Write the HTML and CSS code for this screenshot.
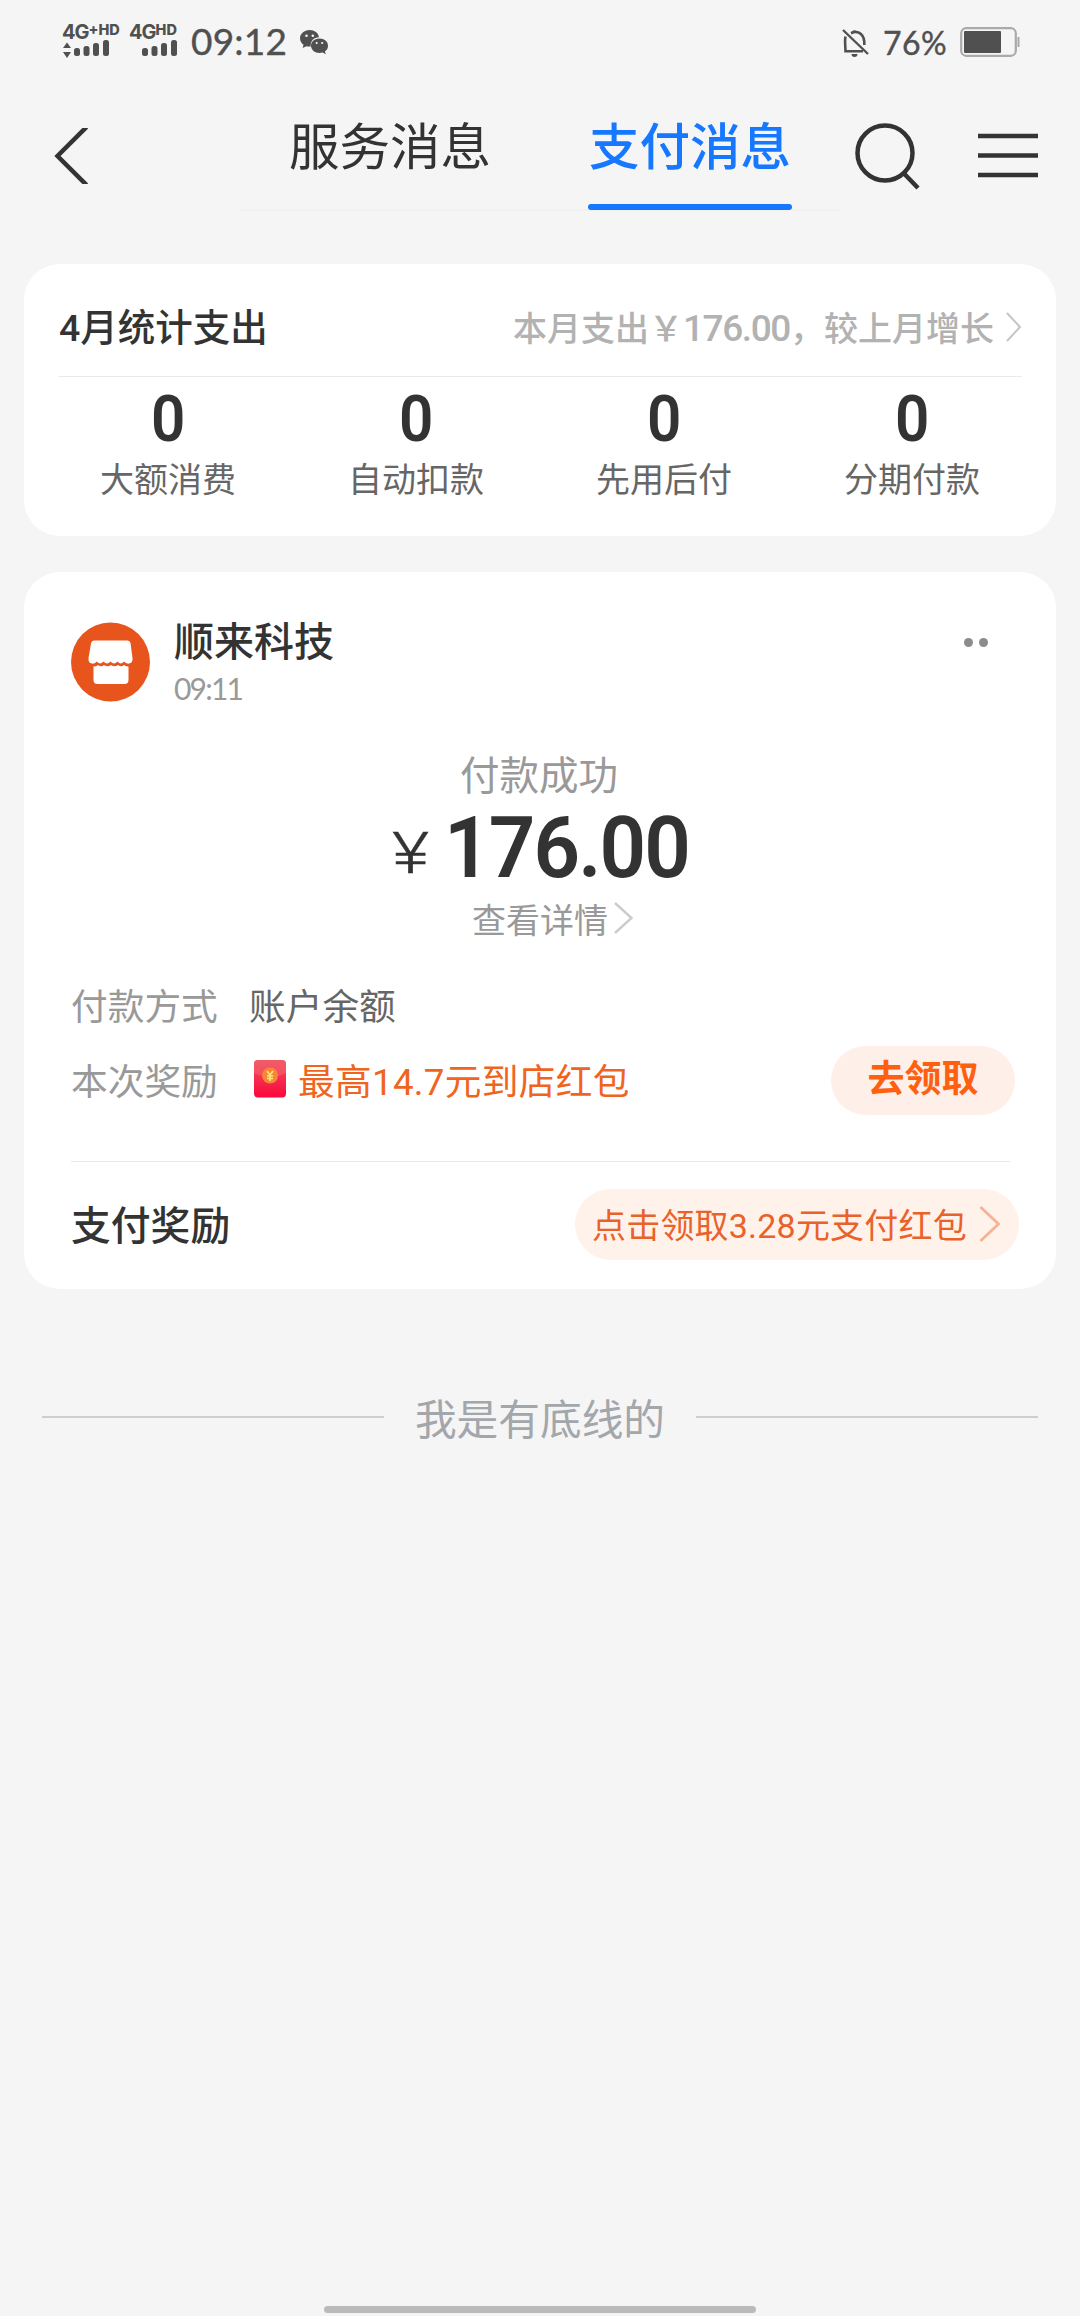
FILE: index.html
```html
<!DOCTYPE html>
<html lang="zh-CN">
<head>
<meta charset="utf-8">
<title>支付消息</title>
<link rel="stylesheet" href="styles.css">
</head>
<body>
<div class="screen">
  <header class="status">
    <div class="signal">
      <div class="net">4G<sup>+HD</sup></div>
      <svg width="50" height="18" viewBox="0 0 50 18" fill="#505050"><path d="M1 8 5 2.5 9 8zM1 12h8l-4 6z"/><rect x="12" y="8" width="6" height="8" rx="2.5"/><rect x="21.500" y="6" width="6" height="10" rx="2.500"/><rect x="31" y="3" width="6" height="13" rx="2.500"/><rect x="41" y="0" width="6" height="16" rx="2.500"/></svg>
    </div>
    <div class="signal second">
      <div class="net">4G<sup>HD</sup></div>
      <svg width="50" height="18" viewBox="0 0 50 18" fill="#505050"><rect x="12" y="8" width="6" height="8" rx="2.500"/><rect x="21.500" y="6" width="6" height="10" rx="2.500"/><rect x="31" y="3" width="6" height="13" rx="2.500"/><rect x="41" y="0" width="6" height="16" rx="2.500"/></svg>
    </div>
    <span class="clock">09:12</span>
    <svg class="wechat" width="29" height="25" viewBox="0 0 29 25" fill="#505050"><path d="M9.500 0C4.200 0 0 3.700 0 8.300c0 2.600 1.300 4.900 3.500 6.400L2.700 18l3.600-1.800c1.500.4 3 .5 4.500.3C10.100 11 14 7.300 19 7.200 18.500 3 14.500 0 9.500 0z"/><path d="M19.500 8.500c-4.700 0-8.500 3.100-8.500 7.200s3.800 7.200 8.500 7.200c1.100 0 2.200-.2 3.200-.5l3 1.800-.7-2.900c2-1.300 3-3.300 3-5.600 0-4.100-3.800-7.200-8.500-7.200z"/><g fill="#f5f5f5"><circle cx="6.500" cy="5.800" r="1.300"/><circle cx="12.800" cy="5.800" r="1.300"/><circle cx="16.700" cy="13" r="1.100"/><circle cx="22.200" cy="13" r="1.100"/></g></svg>
    <svg class="bell" width="28" height="30" viewBox="0 0 28 30" fill="none" stroke="#505050" stroke-width="2.600"><path d="M3.500 8.500C2.500 13 3.500 19 3.500 23.200H21M9 5.200C17 1.500 23 7 22.300 17"/><path d="M1 2 26 26" stroke-width="2.400"/><path d="M9.500 4a3.500 3.500 0 0 1 6 0zM9.500 26h6a3 3 0 0 1-6 0z" fill="#505050" stroke="none"/></svg>
    <span class="percent">76%</span>
    <svg class="battery" width="60" height="30" viewBox="0 0 60 30"><rect x="1.200" y="1.200" width="54.600" height="27.600" rx="5" fill="none" stroke="#aaa" stroke-width="2.200"/><rect x="4" y="4" width="37" height="22" rx="1" fill="#505050"/><path d="M58.500 10v10" stroke="#aaa" stroke-width="2"/></svg>
  </header>

  <nav class="nav">
    <svg class="back" width="34" height="56" viewBox="0 0 34 56" fill="none" stroke="#333" stroke-width="4.500"><path d="M32.500-1 3.500 28 32.500 57"/></svg>
    <div class="tabs">
      <div class="tab">服务消息</div>
      <div class="tab active">支付消息</div>
    </div>
    <svg class="search" width="66" height="68" viewBox="0 0 66 68" fill="none" stroke="#333" stroke-width="4.500"><circle cx="30" cy="30" r="27.500"/><path d="M48.500 50 63 65"/></svg>
    <svg class="menu" width="60" height="46" viewBox="0 0 60 46" stroke="#333" stroke-width="4.500"><path d="M0 3h60M0 22.500h60M0 42h60"/></svg>
  </nav>

  <main>
    <section class="card summary">
      <div class="summary-head">
        <h2>4月统计支出</h2>
        <div class="trend"><span>本月支出￥<b>176.00</b>，较上月增长</span>
          <svg width="16" height="30" viewBox="0 0 16 30" fill="none" stroke="#c4c4c4" stroke-width="2"><path d="M1 1 14 15 1 29"/></svg></div>
      </div>
      <div class="stats">
        <div class="stat"><strong>0</strong><span>大额消费</span></div>
        <div class="stat"><strong>0</strong><span>自动扣款</span></div>
        <div class="stat"><strong>0</strong><span>先用后付</span></div>
        <div class="stat"><strong>0</strong><span>分期付款</span></div>
      </div>
    </section>

    <section class="card bill">
      <div class="merchant">
        <svg class="avatar" width="80" height="80" viewBox="0 0 80 80"><circle cx="39.500" cy="40" r="39.500" fill="#e7541c"/><path d="M24 18.500h32q3 0 3.600 3L61.500 36q.5 5-3.500 5.600-3 .4-5-2-3 3.800-6.500 0-3.500 3.800-7 0-3.500 3.800-7 0-3.500 3.800-6.500 0-2 2.400-5 2-4-.6-3.500-5.600l2.500-14.500q.600-3 3.500-3z" fill="#fff"/><path d="M22.500 44.500q3 0 4.500-1.500 3 2.600 6 0 3.500 2.600 7 0 3.500 2.600 7 0 3 2.600 6 0 2 1.500 4.500 1.500V58q0 4-4 4H26.500q-4 0-4-4z" fill="#fff"/></svg>
        <div class="who"><h3>顺来科技</h3><time>09:11</time></div>
        <div class="more"><i></i><i></i></div>
      </div>
      <div class="paid">付款成功</div>
      <div class="amount"><span class="yen">¥</span><strong>176.00</strong></div>
      <div class="detail">查看详情<svg width="20" height="32" viewBox="0 0 20 32" fill="none" stroke="#ccc" stroke-width="2.400"><path d="M1 1 17.500 16 1 31"/></svg></div>
      <dl class="rows">
        <div class="row"><dt>付款方式</dt><dd>账户余额</dd></div>
        <div class="row"><dt>本次奖励</dt><dd class="reward">
          <svg width="34" height="38" viewBox="0 0 34 38"><defs><linearGradient id="pk" x2="0" y2="1"><stop stop-color="#f0525f"/><stop offset="1" stop-color="#fb063c"/></linearGradient></defs><rect x="1" width="32" height="37.500" rx="4" fill="url(#pk)"/><path d="M1 13q16 8 32 0V4q0-4-4-4H5Q1 0 1 4z" fill="#f4606a" opacity=".6"/><circle cx="17" cy="15.500" r="8" fill="#f98536"/><path d="m14 11 3 4 3-4M17 15v6M14 16h6M14 18.500h6" fill="none" stroke="#ffe27a" stroke-width="1.700"/></svg>
          <span>最高14.7元到店红包</span></dd>
          <button class="claim">去领取</button></div>
      </dl>
      <div class="bonus">
        <h3>支付奖励</h3>
        <div class="pill"><span>点击领取3.28元支付红包</span><svg width="22" height="36" viewBox="0 0 22 36" fill="none" stroke="#f5b394" stroke-width="2.800"><path d="M1.500 1 19.500 18 1.500 35"/></svg></div>
      </div>
    </section>
    <div class="end"><span>我是有底线的</span></div>
  </main>
  <div class="handle"></div>
</div>
</body>
</html>
```

FILE: styles.css
```css
* { box-sizing: border-box; margin: 0; padding: 0; }
body {
  background: #f5f5f5;
  color: #333;
  font-family: Roboto, "Noto Sans CJK SC", sans-serif;
}
svg { display: block; flex: none; overflow: visible; }
h2, h3 { font-weight: 500; }
.screen { width: 1080px; height: 2316px; display: flex; flex-direction: column; white-space: nowrap; overflow: hidden; }

.status { height: 84px; display: flex; align-items: flex-start; padding-left: 62px; color: #505050; }
.signal { width: 67px; padding-top: 24px; }
.net { height: 16px; font: 700 20px/17px Inter, sans-serif; letter-spacing: -1px; display: flex; }
.net sup { font-size: 14.5px; line-height: 12px; font-weight: 800; letter-spacing: 0; }
.second { width: 62px; }
.second svg { margin-left: 1px; }
.clock { width: 109px; font: 400 37px/82px Lato, sans-serif; letter-spacing: .2px; -webkit-text-stroke: .4px; }
.wechat { margin-top: 30px; }
.bell { margin: 28px 13px 0 513px; }
.percent { width: 77px; font: 400 32px/86px Lato, sans-serif; letter-spacing: .4px; -webkit-text-stroke: .4px; }
.battery { margin-top: 27px; }

.nav { height: 180px; display: flex; align-items: flex-start; }
.back { margin: 44px 0 0 54px; overflow: hidden; }
.tabs { margin-left: 152px; width: 600px; height: 127px; display: flex; padding-left: 48px; gap: 96px; border-bottom: 2px solid #f1f1f1; }
.tab { width: 204px; height: 126px; text-align: center; font-size: 50.5px; line-height: 128px; }
.tab.active { color: #1677ff; font-weight: 500; position: relative; }
.tab.active::after { content: ""; position: absolute; left: 0; right: 0; bottom: 0; height: 6px; border-radius: 3px; background: #1677ff; }
.search { margin: 39px 0 0 15px; }
.menu { margin: 49px 0 0 57px; }

.card { margin: 0 24px; background: #fff; border-radius: 36px; }
.summary { height: 272px; padding: 0 34px 0 35px; }
.summary-head { height: 113px; display: flex; justify-content: space-between; align-items: center; border-bottom: 1px solid #eaeaea; padding: 13px 0 0; }
.summary-head h2 { font-size: 37.5px; line-height: 50px; padding-top: 2px; }
.trend { display: flex; align-items: center; gap: 12px; color: #b2b2b2; font-size: 34px; font-weight: 500; }
.trend b { font-weight: 500; font-size: 37px; letter-spacing: -1.4px; }
.stats { display: grid; grid-template-columns: repeat(4, 248px); margin-left: -15px; padding-top: 1px; }
.stat { display: flex; flex-direction: column; align-items: center; }
.stat strong { font-size: 64px; font-weight: 600; line-height: 84px; transform: scaleX(.94); }
.stat span { font-size: 34px; line-height: 36px; color: #666; }

.bill { margin-top: 36px; height: 717px; padding: 0 37px 0 47px; }
.merchant { display: flex; padding-top: 50px; height: 174px; }
.avatar { margin-right: 23px; }
.who { flex: 1; padding-top: 1px; }
.who h3 { font-size: 40px; line-height: 40px; }
.who time { display: block; font: 400 30px/32px Lato, sans-serif; color: #999; margin-top: 9px; letter-spacing: -1.8px; }
.more { display: flex; gap: 6px; padding: 16px 31px 0 0; }
.more i { width: 9px; height: 9px; border-radius: 50%; background: #8c8c8c; }
.paid { text-align: center; color: #999; font-size: 39.5px; line-height: 61px; height: 58px; padding-right: 12px; }
.amount { display: flex; justify-content: center; align-items: baseline; height: 84px; line-height: 88px; gap: 14px; }
.amount strong { font-size: 85px; font-weight: 600; letter-spacing: -2px; transform: scaleX(.96); }
.yen { font-size: 57px; font-weight: 300; -webkit-text-stroke: .5px; transform: translateY(-4px) scaleX(1.25); }
.detail { display: flex; align-items: center; justify-content: center; gap: 6px; height: 60px; color: #999; font-size: 34px; padding-left: 16px; }
.rows { padding-top: 18px; }
.row { display: flex; align-items: center; height: 75px; font-size: 36.7px; }
.row dt { color: #999; width: 178px; }
.row dd { color: #666; }
.row .reward { color: #f0641e; display: flex; align-items: center; gap: 11px; margin-left: 4px; flex: 1; }
.reward span { letter-spacing: .3px; }
.claim { width: 184px; height: 69px; border: 0; border-radius: 35px; margin: 3px 4px 0 0; background: #ffefe9; color: #ff6010; font: 700 37px/60px "Noto Sans CJK SC", sans-serif; padding-bottom: 8px; }
.bonus { margin-top: 45px; border-top: 1px solid #e8e8e8; margin-right: 9px; height: 126px; display: flex; align-items: center; justify-content: space-between; }
.bonus h3 { font-size: 39.8px; padding-bottom: 5px; }
.pill { width: 444px; height: 71px; flex: none; margin-right: -9px; border-radius: 36px; background: #fff2ea; color: #e8622a; font-size: 34px; display: flex; align-items: center; justify-content: space-between; padding: 0 18px 0 17px; }
.pill span { padding-bottom: 3px; letter-spacing: .2px; }
.pill svg { margin-bottom: 1px; }
.end { display: flex; align-items: center; gap: 31px; margin: 95px 42px 0; height: 66px; color: #a3a6ab; font-size: 41.7px; }
.end::before, .end::after { content: ""; flex: 1; height: 2px; background: #cdced0; }
.handle { width: 432px; height: 7px; border-radius: 4px; background: #bababa; margin: auto auto 3px; }
```
